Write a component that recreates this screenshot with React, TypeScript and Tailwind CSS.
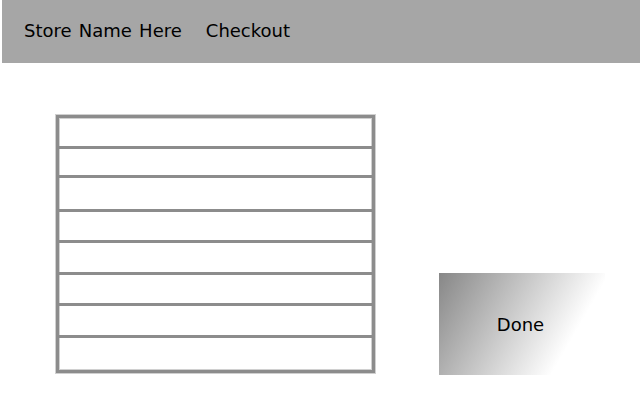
import React from "react";

const rows = [28, 26, 31, 28, 29, 28, 29];

export default function App() {
  return (
    <div className="w-[640px] h-[400px] bg-white overflow-hidden" style={{ fontFamily: '"DejaVu Sans", sans-serif' }}>
      <header className="ml-[2px] h-[63px] bg-[#a6a6a6] flex items-center pl-[22px] pb-[2px] gap-[24px] text-[18px] text-black">
        <span className="[word-spacing:1.5px]">Store Name Here</span>
        <span>Checkout</span>
      </header>
      <div className="flex items-start pl-[56px] pt-[52px]">
        <div className="w-[319px] border-[3px] border-[#8c8c8c] shadow-[0_0_0_1px_#d0d0d0,inset_0_0_0_1px_#d0d0d0] flex flex-col">
          {rows.map((h, i) => (
            <div key={i} className="border-b-[3px] border-[#8c8c8c]" style={{ height: h + 3 }} />
          ))}
          <div className="h-[32px]" />
        </div>
        <button className="ml-[64px] mt-[158px] w-[166px] h-[102px] pr-[3px] bg-[linear-gradient(120deg,#878787_0%,#ffffff_76%)] text-[18px] text-black flex items-center justify-center">
          Done
        </button>
      </div>
    </div>
  );
}
